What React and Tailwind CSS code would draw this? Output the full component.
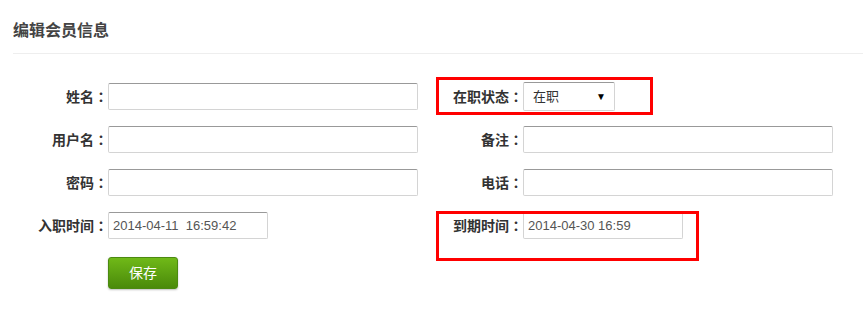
const FONT = { fontFamily: '"Liberation Sans", "Noto Sans CJK SC", sans-serif' };
const COLON = { fontFamily: '"Noto Sans CJK TC", sans-serif' };

function Field({ label, children }) {
  return (
    <div className="flex h-[43px] items-center">
      <label className="w-[95px] shrink-0 text-right text-[14px] font-bold text-[#333]">
        {label}
        <span style={COLON}>：</span>
      </label>
      {children}
    </div>
  );
}

function TextInput({ value = '', width = 'w-[310px]' }) {
  return (
    <input
      type="text"
      readOnly
      value={value}
      className={`${width} h-[27px] rounded-[2px] border border-[#d4d4d4] border-t-[#999] bg-white pl-[4px] text-[13px] text-[#555] outline-none`}
    />
  );
}

function Highlight({ className }) {
  return <div className={`pointer-events-none absolute border-[3px] border-[#ff0000] ${className}`} />;
}

export default function App() {
  return (
    <div className="min-h-[316px] bg-white pl-[13px]" style={FONT}>
      <div className="border-b border-[#eeeeee] pb-[10px] pt-[19px]">
        <h2 className="text-[16px] font-bold leading-[24px] text-[#444]">编辑会员信息</h2>
      </div>

      <div className="mt-[21px] grid grid-cols-[415px_415px]">
        <Field label="姓名">
          <TextInput />
        </Field>
        <div className="relative">
          <Field label="在职状态">
            <div className="flex h-[29px] w-[92px] items-center justify-between rounded-[2px] border border-[#d4d4d4] border-t-[#999] bg-white pl-[9px] pr-[8px] text-[13px] text-[#333]">
              <span>在职</span>
              <span className="text-[10px] text-black">▼</span>
            </div>
          </Field>
          <Highlight className="left-[8px] top-[2px] h-[38px] w-[217px]" />
        </div>

        <Field label="用户名">
          <TextInput />
        </Field>
        <Field label="备注">
          <TextInput />
        </Field>

        <Field label="密码">
          <TextInput />
        </Field>
        <Field label="电话">
          <TextInput />
        </Field>

        <Field label="入职时间">
          <TextInput value="2014-04-11  16:59:42" width="w-[160px]" />
        </Field>
        <div className="relative">
          <Field label="到期时间">
            <TextInput value="2014-04-30 16:59" width="w-[160px]" />
          </Field>
          <Highlight className="left-[8px] top-[7px] h-[50px] w-[263px]" />
        </div>
      </div>

      <div className="ml-[95px] mt-[10px]">
        <button
          type="button"
          className="h-[32px] w-[70px] rounded-[3px] border border-[#4b8a10] bg-gradient-to-b from-[#70b918] to-[#4a8a0a] text-[14px] text-white shadow-[0_1px_2px_rgba(0,0,0,0.25)]"
        >
          保存
        </button>
      </div>
    </div>
  );
}
